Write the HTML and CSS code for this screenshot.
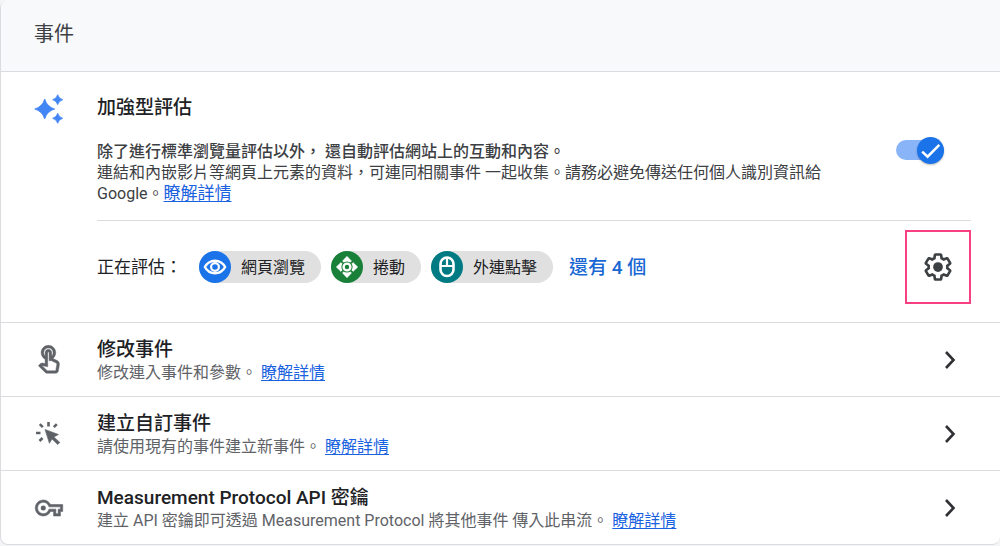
FILE: index.html
```html
<!DOCTYPE html>
<html lang="zh-Hant">
<head>
<meta charset="utf-8">
<meta name="viewport" content="width=device-width, initial-scale=1">
<title>事件</title>
<link rel="stylesheet" href="styles.css">
</head>
<body>
<main class="card">
  <header class="card-header"><h1 class="card-title">事件</h1></header>

  <section class="enhanced">
    <svg class="icon sparkle" viewBox="0 0 32 32" aria-hidden="true">
      <path d="M11.7 6Q14 13.700 21.700 16Q14 18.300 11.700 26Q9.400 18.300 1.700 16Q9.400 13.700 11.700 6ZM24.700 1.700Q25.800 5.600 29.700 6.700Q25.800 7.800 24.700 11.700Q23.600 7.800 19.700 6.700Q23.600 5.600 24.700 1.700ZM24.700 20.300Q25.800 24.200 29.700 25.300Q25.800 26.400 24.700 30.300Q23.600 26.400 19.700 25.300Q23.600 24.200 24.700 20.300Z" stroke="#4285f4" stroke-width=".8" stroke-linejoin="round"/>
    </svg>
    <div class="enhanced-body">
      <div class="intro">
        <div class="intro-text">
          <h2 class="heading">加強型評估</h2>
          <p class="lead">除了進行標準瀏覽量評估以外， 還自動評估網站上的互動和內容。</p>
          <p class="note">連結和內嵌影片等網頁上元素的資料，可連同相關事件 一起收集。請務必避免傳送任何個人識別資訊給 Google。<a class="link link-large" href="#">瞭解詳情</a></p>
        </div>
        <label class="switch">
          <input class="switch-input" type="checkbox" role="switch" aria-label="加強型評估" checked>
          <span class="switch-thumb">
            <svg viewBox="0 0 26 26" aria-hidden="true"><path d="M5 14l5.200 5L21.500 7.500" fill="none" stroke="#fff" stroke-width="2.400"/></svg>
          </span>
        </label>
      </div>
      <div class="measuring">
        <span class="measuring-label">正在評估：</span>
        <ul class="chips">
          <li class="chip">
            <svg class="chip-icon blue" viewBox="0 0 32 32" aria-hidden="true">
              <path d="M4.500 16Q8.500 8.500 16 8.500T27.500 16Q23.500 23.500 16 23.500T4.500 16Z" fill="#fff"/>
              <path d="M7.200 16Q10.500 11 16 11T24.800 16Q21.500 21 16 21T7.200 16Z" fill="#1a73e8"/>
              <circle cx="16" cy="16" r="3.900" fill="none" stroke="#fff" stroke-width="2.200"/>
            </svg>網頁瀏覽</li>
          <li class="chip">
            <svg class="chip-icon green" viewBox="0 0 32 32" aria-hidden="true">
              <path d="M16 5.500l4.300 4.500-2 2h-4.600l-2-2zM16 26.500l4.300-4.500-2-2h-4.600l-2 2zM5.500 16l4.500-4.300 2 2v4.600l-2 2zM26.500 16l-4.500-4.300-2 2v4.600l2 2z" fill="#fff" stroke="#fff"/>
              <circle cx="16" cy="16" r="5.600" fill="#188038"/>
              <circle cx="16" cy="16" r="3.400" fill="none" stroke="#fff" stroke-width="2.400"/>
            </svg>捲動</li>
          <li class="chip">
            <svg class="chip-icon teal" viewBox="0 0 32 32" aria-hidden="true">
              <rect x="9.500" y="6.500" width="13" height="18.500" rx="6.500" fill="none" stroke="#fff" stroke-width="2.600"/>
              <path d="M9.500 15h13M16 6.500V15" fill="none" stroke="#fff" stroke-width="2.200"/>
            </svg>外連點擊</li>
        </ul>
        <a class="more" href="#">還有 4 個</a>
        <button class="settings" type="button" aria-label="設定">
          <svg viewBox="0 0 24 24" width="30" height="30" aria-hidden="true">
            <path d="M19.430 12.980c.04-.32.07-.64.07-.98s-.03-.66-.07-.98l2.110-1.650c.19-.15.24-.42.12-.64l-2-3.460c-.12-.22-.39-.3-.61-.22l-2.490 1c-.52-.4-1.080-.73-1.690-.98l-.38-2.650C14.460 2.180 14.250 2 14 2h-4c-.25 0-.46.18-.49.42l-.38 2.650c-.61.25-1.170.59-1.690.98l-2.490-1c-.23-.09-.49 0-.61.22l-2 3.460c-.13.22-.07.49.12.64l2.110 1.650c-.04.32-.07.65-.07.98s.03.66.07.98l-2.110 1.650c-.19.15-.24.42-.12.64l2 3.460c.12.22.39.3.61.22l2.490-1c.52.4 1.080.73 1.690.98l.38 2.650c.03.24.24.42.49.42h4c.25 0 .46-.18.49-.42l.38-2.650c.61-.25 1.170-.59 1.690-.98l2.490 1c.23.09.49 0 .61-.22l2-3.460c.12-.22.07-.49-.12-.64l-2.110-1.650z" fill="none" stroke="#3c4043" stroke-width="2.100"/>
            <circle cx="12" cy="12" r="3.900" fill="#3c4043"/>
          </svg>
        </button>
      </div>
    </div>
  </section>

  <section class="row">
    <svg class="icon" viewBox="0 0 24 24" aria-hidden="true"><path d="M18.190 12.440l-3.240-1.620c1.290-1 2.120-2.560 2.120-4.320 0-3.030-2.470-5.500-5.500-5.500s-5.500 2.470-5.500 5.500c0 2.130 1.220 3.980 3 4.890v3.260c-2.110-.45-2.010-.44-2.260-.44-.53 0-1.030.21-1.410.59L4 16.220l5.090 5.090c.43.44 1.030.69 1.650.69h6.300c.98 0 1.810-.7 1.970-1.670l.8-4.710c.22-1.300-.43-2.580-1.620-3.180zM17.040 20h-6.300c-.09 0-.17-.04-.24-.1l-3.680-3.680 4.250.89V6.500c0-.28.22-.5.5-.5s.5.22.5.5v6h1.760l3.460 1.730c.4.200.62.63.55 1.060l-.8 4.710zM8.070 6.500c0-1.930 1.570-3.500 3.500-3.500s3.500 1.570 3.500 3.500c0 .95-.38 1.810-1 2.440V6.500c0-1.380-1.120-2.500-2.500-2.500s-2.500 1.120-2.500 2.500v2.440c-.62-.63-1-1.490-1-2.440z" stroke="#5f6368" stroke-width=".3"/></svg>
    <div class="row-text">
      <h2 class="heading">修改事件</h2>
      <p class="desc">修改連入事件和參數。 <a class="link" href="#">瞭解詳情</a></p>
    </div>
    <button class="open" type="button" aria-label="修改事件"><svg viewBox="0 0 24 24" aria-hidden="true"><path d="M8 4l7.500 8L8 20"/></svg></button>
  </section>

  <section class="row">
    <svg class="icon" viewBox="0 0 32 32" aria-hidden="true">
      <path d="M12 11.500l13.500 5-4.600 2.600 6 5.300-2.200 2.200-5.700-5.600-2.600 4.300z" stroke="#5f6368" stroke-width=".6"/>
      <path d="M3 15h4.500M15.500 4v4.500M6.800 6.200l3 3M23.800 6.200l-3 3M6.500 23l3-3" fill="none" stroke="#5f6368" stroke-width="2.600"/>
    </svg>
    <div class="row-text">
      <h2 class="heading">建立自訂事件</h2>
      <p class="desc">請使用現有的事件建立新事件。 <a class="link" href="#">瞭解詳情</a></p>
    </div>
    <button class="open" type="button" aria-label="建立自訂事件"><svg viewBox="0 0 24 24" aria-hidden="true"><path d="M8 4l7.500 8L8 20"/></svg></button>
  </section>

  <section class="row">
    <svg class="icon" viewBox="-2 -2 28 28" aria-hidden="true"><path d="M22 19h-6v-4h-2.680c-1.140 2.420-3.600 4-6.320 4-3.860 0-7-3.140-7-7s3.140-7 7-7c2.720 0 5.170 1.580 6.320 4H24v6h-2v4zm-4-2h2v-4h2v-2H11.940l-.23-.67C11.010 8.340 9.110 7 7 7c-2.760 0-5 2.240-5 5s2.240 5 5 5c2.110 0 4.010-1.340 4.710-3.330l.23-.67H18v4z" stroke="#5f6368" stroke-width=".5"/><circle cx="7" cy="12" r="2.200"/></svg>
    <div class="row-text">
      <h2 class="heading">Measurement Protocol API 密鑰</h2>
      <p class="desc">建立 API 密鑰即可透過 Measurement Protocol 將其他事件 傳入此串流。 <a class="link" href="#">瞭解詳情</a></p>
    </div>
    <button class="open" type="button" aria-label="Measurement Protocol API 密鑰"><svg viewBox="0 0 24 24" aria-hidden="true"><path d="M8 4l7.500 8L8 20"/></svg></button>
  </section>
</main>
</body>
</html>
```
FILE: styles.css
```css
* { box-sizing: border-box; }

body {
  margin: 0;
  background: #f4f5f7;
  color: #202124;
  font-family: Roboto, "Noto Sans CJK TC", sans-serif;
  font-size: 16px;
  line-height: 21px;
}

h1, h2, p, ul { margin: 0; padding: 0; }

button {
  padding: 0;
  border: 0;
  background: none;
  font: inherit;
  cursor: pointer;
}

svg { display: block; }

.card {
  overflow: hidden;
  border: 1px solid #dadce0;
  border-top: 0;
  border-right: 0;
  border-radius: 8px 0 8px 8px;
  background: #fff;
}

.card-header {
  padding: 20px 33px 23px;
  border-bottom: 1px solid #dadce0;
  background: #f8f9fb;
}

.card-title {
  font-size: 20px;
  font-weight: 400;
  line-height: 28px;
  color: #3c4043;
}

.icon {
  flex: none;
  width: 32px;
  height: 32px;
  fill: #5f6368;
}

.sparkle { fill: #4285f4; }

.heading {
  font-size: 19px;
  font-weight: 500;
  line-height: 24px;
}

.link { color: #1a62e0; text-decoration: underline; text-underline-offset: 2px; }
.link-large { display: inline-block; font-size: 17px; line-height: 21px; vertical-align: bottom; }

.enhanced {
  display: flex;
  align-items: flex-start;
  gap: 32px;
  padding: 21px 29px 18px 32px;
}

.enhanced-body { flex: 1; padding-top: 3px; }

.intro {
  display: flex;
  align-items: center;
  gap: 40px;
  padding: 0 27px 16px 0;
  border-bottom: 1px solid #dadce0;
}

.intro-text { flex: 1; }
.lead { margin-top: 21px; font-weight: 500; color: #3c4043; }
.note { color: #3c4043; }

.switch {
  position: relative;
  display: flex;
  align-items: center;
  flex: none;
  cursor: pointer;
}

.switch-input {
  width: 48px;
  height: 20px;
  margin: 0;
  appearance: none;
  border-radius: 10px;
  background: #8ab4f8;
}

.switch-thumb {
  position: absolute;
  right: 0;
  width: 27px;
  height: 27px;
  border-radius: 50%;
  background: #1a73e8;
  box-shadow: 0 1px 2px #0004;
}

.measuring {
  display: flex;
  align-items: center;
  padding-top: 9px;
}

.measuring-label { margin-right: 17px; font-size: 17px; }

.chips {
  display: flex;
  gap: 10px;
  margin-right: 16px;
  list-style: none;
}

.chip {
  display: flex;
  align-items: center;
  gap: 10px;
  padding-right: 16px;
  border-radius: 16px;
  background: #e0e0e0;
}

.chip-icon {
  width: 32px;
  height: 32px;
  border-radius: 50%;
}

.blue { background: #1a73e8; }
.green { background: #188038; }
.teal { background: #007b83; }

.more {
  font-size: 19px;
  font-weight: 500;
  color: #1967d2;
  text-decoration: none;
}

.settings {
  display: grid;
  place-items: center;
  width: 66px;
  height: 74px;
  margin-left: auto;
  border: 2px solid #f73f81;
}

.row {
  display: flex;
  align-items: center;
  gap: 32px;
  padding: 13px 38px 12px 32px;
  border-top: 1px solid #dadce0;
}

.row-text { flex: 1; padding-top: 2px; }
.desc { line-height: 22px; color: #5f6368; }

.open { width: 24px; height: 24px; }

.open path {
  fill: none;
  stroke: #303134;
  stroke-width: 2.6;
}
```
